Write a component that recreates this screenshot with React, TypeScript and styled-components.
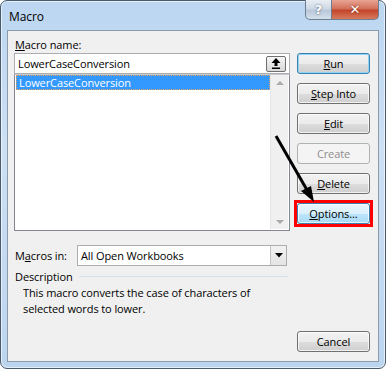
import React from "react";
import styled, { createGlobalStyle, css } from "styled-components";

const GlobalStyle = createGlobalStyle`
  html, body {
    margin: 0;
    padding: 0;
    background: #ffffff;
  }
  body {
    font-family: "Open Sans", "Noto Sans", sans-serif;
    font-size: 11px;
    letter-spacing: -0.1px;
    color: #000;
  }
`;

const Window = styled.div`
  position: relative;
  box-sizing: border-box;
  width: 386px;
  height: 369px;
  display: flex;
  flex-direction: column;
  border: 1px solid #4b5b6b;
  border-radius: 7px;
  background: linear-gradient(180deg, #bcd6f1 0%, #cde0f4 40%, #bcd5ef 100%);
  box-shadow: inset 0 0 0 1px rgba(255, 255, 255, 0.6);
`;

const TitleBar = styled.div`
  height: 29px;
  display: flex;
  align-items: flex-start;
  justify-content: space-between;
  padding-left: 8px;
  padding-right: 6px;
`;

const Title = styled.div`
  margin-top: 7px;
  font-size: 12px;
  color: #000;
`;

const Controls = styled.div`
  display: flex;
  margin-top: -1px;
`;

const CaptionButton = styled.div<{ $close?: boolean }>`
  box-sizing: border-box;
  height: 20px;
  display: flex;
  align-items: center;
  justify-content: center;
  border: 1px solid #6d7e90;
  border-top: none;
  font-family: "DejaVu Sans", sans-serif;
  font-weight: bold;
  color: #fff;
  font-size: 13px;
  ${(p) =>
    p.$close
      ? css`
          width: 47px;
          border-radius: 0 0 5px 0;
          border-left: none;
          background: linear-gradient(180deg, #e8a493 0%, #d2715b 45%, #c3462a 55%, #d77a5e 100%);
          text-shadow: 0 0 2px #6a2010;
        `
      : css`
          width: 27px;
          border-radius: 0 0 0 5px;
          background: linear-gradient(180deg, #e9eef4 0%, #cfd9e5 45%, #b9c8d9 55%, #d3dfeb 100%);
          text-shadow: 0 0 2px #3a4a5a;
        `}
`;

const Client = styled.div`
  flex: 1;
  margin: 0 6px 6px 6px;
  box-sizing: border-box;
  background: #f0f0f0;
  border: 1px solid #8b9bab;
  padding: 6px 8px 0 6px;
  display: flex;
  flex-direction: column;
`;

const Top = styled.div`
  display: flex;
  gap: 7px;
`;

const LeftCol = styled.div`
  width: 276px;
  display: flex;
  flex-direction: column;
`;

const Label = styled.div`
  height: 16px;
  line-height: 16px;
  padding-left: 1px;
`;

const NameInput = styled.div`
  box-sizing: border-box;
  height: 21px;
  background: #fff;
  border: 1px solid #abadb3;
  display: flex;
  align-items: center;
  justify-content: space-between;
  padding: 0 3px 0 3px;
`;

const UploadButton = styled.div`
  box-sizing: border-box;
  width: 20px;
  height: 16px;
  border: 1px solid #707070;
  border-radius: 2px;
  background: linear-gradient(180deg, #f6f6f6 0%, #e6e6e6 50%, #d8d8d8 100%);
  display: flex;
  align-items: center;
  justify-content: center;
`;

const ListBox = styled.div`
  box-sizing: border-box;
  height: 157px;
  background: #fff;
  border: 1px solid #828790;
  border-top-color: #c8cacd;
  display: flex;
  padding: 0 1px 1px 1px;
`;

const Items = styled.div`
  flex: 1;
`;

const Item = styled.div<{ $selected?: boolean }>`
  box-sizing: border-box;
  height: 15px;
  line-height: 13px;
  padding-left: 2px;
  ${(p) =>
    p.$selected &&
    css`
      background: #3399ff;
      color: #fff;
      border: 1px dotted #e6a060;
    `}
`;

const ScrollBar = styled.div`
  width: 17px;
  background: #f0f0f0;
  border-left: 1px solid #e6e6e6;
  display: flex;
  flex-direction: column;
  justify-content: space-between;
  align-items: center;
  padding: 6px 0 5px 0;
`;

const Tri = styled.div<{ $down?: boolean }>`
  width: 0;
  height: 0;
  border-left: 4px solid transparent;
  border-right: 4px solid transparent;
  ${(p) =>
    p.$down
      ? css`border-top: 4px solid #a9a9a9;`
      : css`border-bottom: 4px solid #a9a9a9;`}
`;

const ButtonCol = styled.div`
  width: 73px;
  padding-top: 16px;
  display: flex;
  flex-direction: column;
  gap: 9px;
`;

const Button = styled.div<{ $focused?: boolean; $disabled?: boolean; $hover?: boolean }>`
  position: relative;
  box-sizing: border-box;
  width: 73px;
  height: 21px;
  display: flex;
  align-items: center;
  justify-content: center;
  border: 1px solid #707070;
  border-radius: 3px;
  background: linear-gradient(180deg, #f2f2f2 0%, #ebebeb 50%, #dddddd 51%, #cfcfcf 100%);
  box-shadow: inset 0 0 0 1px rgba(255, 255, 255, 0.7);
  ${(p) =>
    p.$focused &&
    css`
      border-color: #3c7fb1;
      box-shadow: inset 0 0 0 1px #8ed4f4;
    `}
  ${(p) =>
    p.$disabled &&
    css`
      color: #8d8d8d;
      border-color: #adb2b5;
      background: #f4f4f4;
      box-shadow: none;
    `}
  ${(p) =>
    p.$hover &&
    css`
      border-color: #3c7fb1;
      background: linear-gradient(180deg, #eaf6fd 0%, #d9f0fc 50%, #bee6fd 51%, #a7d9f5 100%);
    `}
`;

const Highlight = styled.div`
  position: absolute;
  inset: -4px;
  border: 3px solid #ff0000;
`;

const MacrosRow = styled.div`
  display: flex;
  align-items: center;
  margin-top: 14px;
  width: 273px;
`;

const MacrosLabel = styled.div`
  width: 62px;
  padding-left: 1px;
`;

const Select = styled.div`
  flex: 1;
  box-sizing: border-box;
  height: 21px;
  background: #fff;
  border: 1px solid #abadb3;
  display: flex;
  align-items: center;
  justify-content: space-between;
  padding-left: 3px;
`;

const DropButton = styled.div`
  box-sizing: border-box;
  width: 16px;
  height: 19px;
  border-left: 1px solid #c4c4c4;
  background: linear-gradient(180deg, #f2f2f2 0%, #e4e4e4 100%);
  display: flex;
  align-items: center;
  justify-content: center;
`;

const GroupHeader = styled.div`
  display: flex;
  align-items: center;
  gap: 6px;
  height: 16px;
  margin-top: 2px;
  width: 273px;
  padding-left: 1px;
`;

const GroupLine = styled.div`
  flex: 1;
  height: 1px;
  background: #d5dfe5;
`;

const DescText = styled.div`
  margin-top: 1px;
  padding-left: 9px;
  line-height: 16px;
`;

const Footer = styled.div`
  display: flex;
  justify-content: flex-end;
  margin-top: 14px;
`;

const Arrow = styled.svg`
  position: absolute;
  left: 0;
  top: 0;
  pointer-events: none;
`;

const U: React.FC<{ children: React.ReactNode }> = ({ children }) => (
  <span style={{ textDecoration: "underline" }}>{children}</span>
);

const App: React.FC = () => {
  return (
    <>
      <GlobalStyle />
      <Window>
        <TitleBar>
          <Title>Macro</Title>
          <Controls>
            <CaptionButton>?</CaptionButton>
            <CaptionButton $close>✕</CaptionButton>
          </Controls>
        </TitleBar>
        <Client>
          <Top>
            <LeftCol>
              <Label>
                <U>M</U>acro name:
              </Label>
              <NameInput>
                <span>LowerCaseConversion</span>
                <UploadButton>
                  <svg width="10" height="11" viewBox="0 0 10 11">
                    <path d="M5 0 L9.5 5 L6.5 5 L6.5 8 L3.5 8 L3.5 5 L0.5 5 Z" fill="#000" />
                    <rect x="1" y="9.5" width="8" height="1.5" fill="#000" />
                  </svg>
                </UploadButton>
              </NameInput>
              <ListBox>
                <Items>
                  <Item $selected>LowerCaseConversion</Item>
                </Items>
                <ScrollBar>
                  <Tri />
                  <Tri $down />
                </ScrollBar>
              </ListBox>
            </LeftCol>
            <ButtonCol>
              <Button $focused>
                <U>R</U>un
              </Button>
              <Button>
                <U>S</U>tep Into
              </Button>
              <Button>
                <U>E</U>dit
              </Button>
              <Button $disabled>Create</Button>
              <Button>
                <U>D</U>elete
              </Button>
              <Button $hover>
                <U>O</U>ptions...
                <Highlight />
              </Button>
            </ButtonCol>
          </Top>
          <MacrosRow>
            <MacrosLabel>
              M<U>a</U>cros in:
            </MacrosLabel>
            <Select>
              <span>All Open Workbooks</span>
              <DropButton>
                <svg width="8" height="5" viewBox="0 0 8 5">
                  <path d="M0 0 H8 L4 4.5 Z" fill="#000" />
                </svg>
              </DropButton>
            </Select>
          </MacrosRow>
          <GroupHeader>
            <span>Description</span>
            <GroupLine />
          </GroupHeader>
          <DescText>
            This macro converts the case of characters of
            <br />
            selected words to lower.
          </DescText>
          <Footer>
            <Button>Cancel</Button>
          </Footer>
        </Client>
        <Arrow width="386" height="369" viewBox="0 0 386 369">
          <line x1="275" y1="135" x2="306" y2="189" stroke="#000" strokeWidth="3" />
          <path d="M313 201 L300 190 L310 185 Z" fill="#000" />
        </Arrow>
      </Window>
    </>
  );
};

export default App;
